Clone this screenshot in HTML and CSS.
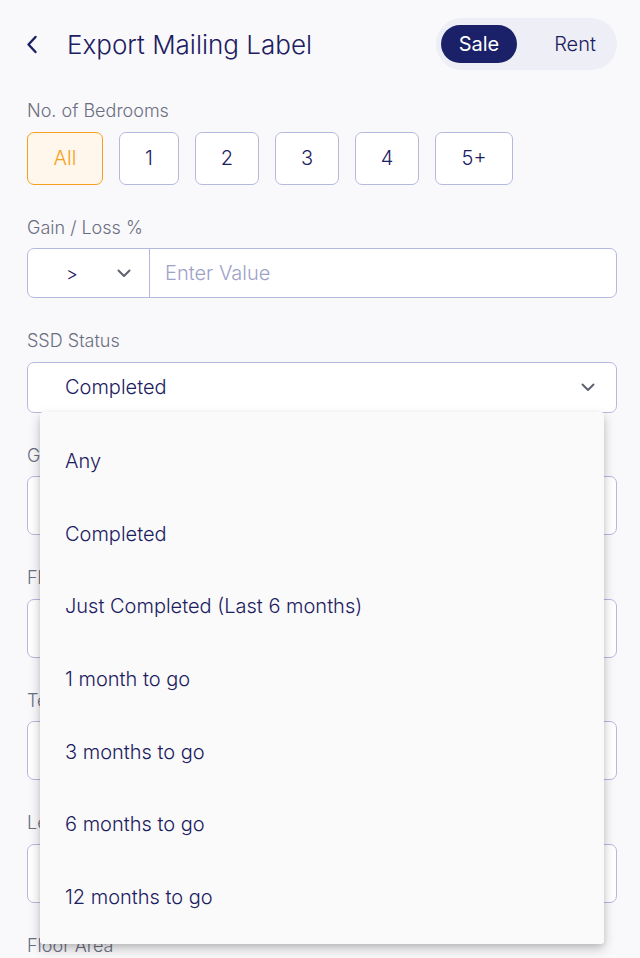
FILE: index.html
```html
<!DOCTYPE html>
<html lang="en">
<head>
<meta charset="utf-8">
<title>Export Mailing Label</title>
<link rel="stylesheet" href="styles.css">
</head>
<body>
<div class="page">
  <header class="header">
    <div class="header-left">
      <svg class="back" width="12" height="19" viewBox="0 0 12 19" aria-hidden="true"><path d="M9.5 2 L2.5 9.5 L9.5 17" fill="none" stroke="#1c2061" stroke-width="2.4" stroke-linecap="round" stroke-linejoin="round"/></svg>
      <h1 class="title">Export Mailing Label</h1>
    </div>
    <div class="toggle">
      <span class="toggle-opt active">Sale</span>
      <span class="toggle-opt">Rent</span>
    </div>
  </header>

  <section class="field field-first">
    <div class="label">No. of Bedrooms</div>
    <div class="chips">
      <span class="chip chip-active w76">All</span>
      <span class="chip w60">1</span>
      <span class="chip w64">2</span>
      <span class="chip w64">3</span>
      <span class="chip w64">4</span>
      <span class="chip w78">5+</span>
    </div>
  </section>

  <section class="field">
    <div class="label">Gain / Loss %</div>
    <div class="group">
      <div class="group-op">
        <span class="op">&gt;</span>
        <svg class="chev" width="14" height="9" viewBox="0 0 14 9" aria-hidden="true"><path d="M1.5 1.5 L7 7 L12.5 1.5" fill="none" stroke="#5f6270" stroke-width="2" stroke-linecap="round" stroke-linejoin="round"/></svg>
      </div>
      <div class="group-input">Enter Value</div>
    </div>
  </section>

  <section class="field field-ssd">
    <div class="label">SSD Status</div>
    <div class="select">
      <span class="select-value">Completed</span>
      <svg class="chev" width="14" height="9" viewBox="0 0 14 9" aria-hidden="true"><path d="M1.5 1.5 L7 7 L12.5 1.5" fill="none" stroke="#5f6270" stroke-width="2" stroke-linecap="round" stroke-linejoin="round"/></svg>
    </div>
    <ul class="menu">
      <li class="menu-item">Any</li>
      <li class="menu-item">Completed</li>
      <li class="menu-item">Just Completed (Last 6 months)</li>
      <li class="menu-item">1 month to go</li>
      <li class="menu-item">3 months to go</li>
      <li class="menu-item">6 months to go</li>
      <li class="menu-item">12 months to go</li>
    </ul>
  </section>

  <section class="field">
    <div class="label">Gross Rental Yield</div>
    <div class="box"></div>
  </section>
  <section class="field">
    <div class="label">Floor Level</div>
    <div class="box"></div>
  </section>
  <section class="field">
    <div class="label">Tenure</div>
    <div class="box"></div>
  </section>
  <section class="field">
    <div class="label">Lease Remaining</div>
    <div class="box"></div>
  </section>
  <section class="field">
    <div class="label">Floor Area</div>
    <div class="box"></div>
  </section>
</div>
</body>
</html>
```

FILE: styles.css
```css
* { box-sizing: border-box; }
html, body { margin: 0; padding: 0; }
body {
  background: #f9f9fb;
  font-family: Inter, "Noto Sans", sans-serif;
  font-weight: 300;
  color: #1c2061;
  overflow: hidden;
  height: 958px;
}
.page {
  padding: 18px 23px 0 27px;
}
.header {
  display: flex;
  align-items: center;
  justify-content: space-between;
  height: 52px;
}
.header-left {
  display: flex;
  align-items: center;
  gap: 29px;
}
.back { display: block; margin-left: -1px; }
.title {
  margin: 0;
  font-size: 26px;
  font-weight: 300;
  color: #1c2061;
}
.toggle {
  display: flex;
  gap: 20px;
  background: #eeeff6;
  border-radius: 26px;
  padding: 7px 4px 7px 5px;
  height: 52px;
}
.toggle-opt {
  width: 76px;
  display: flex;
  align-items: center;
  justify-content: center;
  font-size: 20px;
  color: #1c2061;
  border-radius: 19px;
}
.toggle-opt.active {
  background: #1b2168;
  color: #ffffff;
  font-weight: 400;
}
.field {
  margin-top: 32px;
}
.field-first {
  margin-top: 30px;
}
.label {
  font-size: 18px;
  line-height: 22px;
  color: #6b6e80;
  margin-bottom: 9.5px;
}
.chips {
  display: flex;
  gap: 16px;
}
.chip {
  height: 53px;
  border: 1.5px solid #b5b9e0;
  border-radius: 7px;
  background: #ffffff;
  display: flex;
  align-items: center;
  justify-content: center;
  font-size: 20px;
  color: #1c2061;
}
.chip-active {
  border-color: #f5a11f;
  background: #fff7eb;
  color: #f5a11f;
}
.w60 { width: 60px; }
.w64 { width: 64px; }
.w76 { width: 76px; }
.w78 { width: 78px; }
.group {
  display: flex;
  height: 50px;
  border: 1.5px solid #b5b9e0;
  border-radius: 7px;
  background: #ffffff;
}
.group-op {
  width: 122px;
  border-right: 1.5px solid #b5b9e0;
  display: flex;
  align-items: center;
  padding-left: 38px;
  gap: 39px;
}
.op {
  font-size: 18px;
  color: #1c2061;
}
.group-input {
  display: flex;
  align-items: center;
  padding-left: 15px;
  font-size: 20px;
  color: #9ea2c8;
}
.field-ssd {
  position: relative;
  z-index: 2;
}
.select {
  height: 51px;
  border: 1.5px solid #b5b9e0;
  border-radius: 7px;
  background: #ffffff;
  display: flex;
  align-items: center;
  justify-content: space-between;
  padding: 0 21px 0 37px;
}
.select-value {
  font-size: 20px;
  color: #1c2061;
}
.chev { display: block; }
.menu {
  position: absolute;
  left: 13px;
  top: 100%;
  margin: -1px 0 0 0;
  width: 564px;
  list-style: none;
  padding: 13px 0 11px;
  background: #fafafa;
  border-radius: 3px;
  box-shadow: 0 5px 12px rgba(0, 0, 0, 0.22), 0 2px 4px rgba(0, 0, 0, 0.08);
}
.menu-item {
  height: 72.7px;
  display: flex;
  align-items: center;
  padding-left: 25px;
  font-size: 20px;
  color: #1c2061;
}
.box {
  height: 59px;
  border: 1.5px solid #b5b9e0;
  border-radius: 7px;
  background: #ffffff;
}
```
